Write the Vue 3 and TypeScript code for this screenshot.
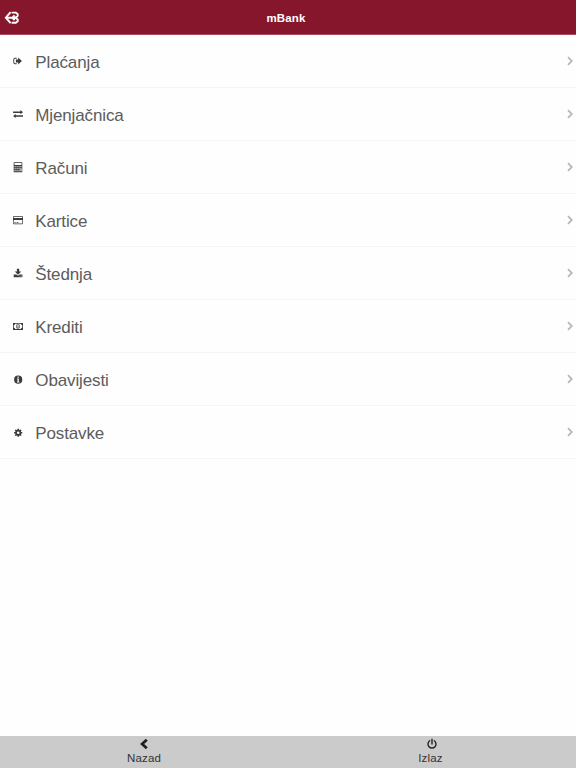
<script setup lang="ts">
type IconName = 'signout' | 'exchange' | 'calculator' | 'card' | 'download' | 'money' | 'info' | 'cog'

interface MenuItem {
  label: string
  icon: IconName
}

const items: MenuItem[] = [
  { label: 'Plaćanja', icon: 'signout' },
  { label: 'Mjenjačnica', icon: 'exchange' },
  { label: 'Računi', icon: 'calculator' },
  { label: 'Kartice', icon: 'card' },
  { label: 'Štednja', icon: 'download' },
  { label: 'Krediti', icon: 'money' },
  { label: 'Obavijesti', icon: 'info' },
  { label: 'Postavke', icon: 'cog' },
]

// Each path is drawn on a 12 x 12 grid and filled with the even-odd rule.
const paths: Record<IconName, string> = {
  signout:
    'M4.7 2.8H3Q1.3 2.8 1.3 4.5V7.5Q1.3 9.2 3 9.2H4.7V8.3H3Q2.2 8.3 2.2 7.5V4.5Q2.2 3.7 3 3.7H4.7ZM3.9 4.5H6.2V2.5L9.9 6L6.2 9.5V7.5H3.9Z',
  exchange:
    'M1.1 3.4H8.4V2.1L11 4.2L8.4 6.2V5H1.1ZM11 7.2H3.7V6L1.1 8.1L3.7 10.1V8.8H11Z',
  calculator:
    'M2.2 1.2H9.8Q10.3 1.2 10.3 1.7V10.7Q10.3 11.2 9.8 11.2H2.2Q1.7 11.2 1.7 10.7V1.7Q1.7 1.2 2.2 1.2ZM2.5 2.1V4H9.5V2.1ZM2.5 5.2V6.3H3.7V5.2ZM4.5 5.2V6.3H5.7V5.2ZM6.5 5.2V6.3H7.7V5.2ZM8.4 5.2V6.3H9.6V5.2ZM2.5 7.2V8.3H3.7V7.2ZM4.5 7.2V8.3H5.7V7.2ZM6.5 7.2V8.3H7.7V7.2ZM2.5 9.2V10.3H3.7V9.2ZM4.5 9.2V10.3H5.7V9.2ZM6.5 9.2V10.3H7.7V9.2ZM8.4 7.2V10.3H9.6V7.2Z',
  card:
    'M2 2H10Q11 2 11 3V9.3Q11 10.3 10 10.3H2Q1 10.3 1 9.3V3Q1 2 2 2ZM1.7 3V4H10.3V3Q10.3 2.7 10 2.7H2Q1.7 2.7 1.7 3ZM1.7 6V9.3Q1.7 9.6 2 9.6H10Q10.3 9.6 10.3 9.3V6ZM2.4 8.2H3.8V9H2.4ZM4.5 8.2H6.5V9H4.5Z',
  download:
    'M4.9 1.8H7.2V4.6H9.3L6.05 7.8L2.8 4.6H4.9ZM1.7 7.5H4.4L6.05 8.8L7.7 7.5H10.4V10.3H1.7ZM7.7 8.8V9.5H8.4V8.8ZM9 8.8V9.5H9.6V8.8Z',
  money:
    'M1 2.9H11V9.9H1ZM3.1 3.7Q3.1 5.1 1.8 5.1V7.7Q3.1 7.7 3.1 9.1H8.9Q8.9 7.7 10.2 7.7V5.1Q8.9 5.1 8.9 3.7ZM6 4Q7.9 4 7.9 6.4T6 8.8T4.1 6.4T6 4ZM6 4.6Q4.7 4.6 4.7 6.4T6 8.2T7.3 6.4T6 4.6ZM5.6 5.1H6.3V7.2H6.8V7.7H5.2V7.2H5.6Z',
  info:
    'M6.2 2.6A4.1 4.1 0 1 1 6.2 10.8A4.1 4.1 0 1 1 6.2 2.6ZM5.5 3.5V4.7H6.8V3.5ZM4.9 5.5V6.3H5.5V8.7H4.9V9.5H7.5V8.7H6.8V5.5Z',
  cog:
    'M5.5 2.7H6.9L7.1 3.8L7.8 4.1L8.7 3.4L9.6 4.3L8.9 5.2L9.2 5.9L10.3 6.1V7.4L9.2 7.6L8.9 8.3L9.6 9.2L8.7 10.1L7.8 9.4L7.1 9.7L6.9 10.8H5.5L5.3 9.7L4.6 9.4L3.7 10.1L2.8 9.2L3.5 8.3L3.2 7.6L2.1 7.4V6.1L3.2 5.9L3.5 5.2L2.8 4.3L3.7 3.4L4.6 4.1L5.3 3.8ZM6.2 5.4A1.35 1.35 0 1 0 6.2 8.1A1.35 1.35 0 1 0 6.2 5.4Z',
}
</script>

<template>
  <div class="app">
    <header class="header">
      <svg class="logo" viewBox="0 0 16 14" aria-hidden="true">
        <path class="logo-line" d="M6.6 1.2L1.8 6.7L6.6 12.2" />
        <path class="logo-line" d="M7.6 1.6H11.8L13.7 3.2V4.9L11.6 6.7L13.7 8.5V10.2L11.8 11.8H7.6" />
        <path class="logo-line" d="M2.6 6.7H12M10.6 4.3L8.3 6.7L10.6 9.1" />
      </svg>
      <h1 class="title">mBank</h1>
    </header>

    <main class="menu">
      <a v-for="item in items" :key="item.label" class="row">
        <svg class="icon" viewBox="0 0 12 12" aria-hidden="true">
          <path :d="paths[item.icon]" fill-rule="evenodd" />
        </svg>
        <span class="label">{{ item.label }}</span>
        <svg class="chevron" viewBox="0 0 6 10" aria-hidden="true">
          <path d="M1 1.2L4.8 5L1 8.8" />
        </svg>
      </a>
    </main>

    <footer class="footer">
      <a class="action">
        <svg class="action-icon" viewBox="0 0 12 12" aria-hidden="true">
          <path class="back" d="M8.8 1.7L4.1 6L8.8 10.3" />
        </svg>
        <span class="caption">Nazad</span>
      </a>
      <a class="action exit">
        <svg class="action-icon" viewBox="0 0 12 12" aria-hidden="true">
          <path class="power-line" d="M3.7 2.8A4 4 0 1 0 8.3 2.8M6 1.3V6" />
        </svg>
        <span class="caption">Izlaz</span>
      </a>
    </footer>
  </div>
</template>

<style>
body {
  margin: 0;
  background: #fefefe;
}
</style>

<style scoped>
.app {
  display: flex;
  flex-direction: column;
  height: 100vh;
  background: #fefefe;
  font-family: "Liberation Sans", Arial, sans-serif;
}

.header {
  display: grid;
  grid-template-columns: 24px 1fr 28px;
  align-items: center;
  box-sizing: border-box;
  height: 35px;
  border-bottom: 1px solid #a54a61;
  background: #85162c;
}

.logo {
  width: 16px;
  height: 14px;
  margin: 1px 0 0 4px;
}

.logo-line {
  fill: none;
  stroke: #fff;
  stroke-width: 1.9;
}

.title {
  margin: 2px 0 0;
  color: #fff;
  font-size: 11.5px;
  letter-spacing: 0.15px;
  line-height: 14px;
  text-align: center;
}

.menu {
  flex: 1;
}

.row {
  display: flex;
  align-items: center;
  box-sizing: border-box;
  height: 53px;
  padding: 0 3px 0 12px;
  border-bottom: 1px solid #f5f5f5;
}

.icon {
  width: 12px;
  height: 12px;
  margin-right: 11.3px;
  fill: #3b3b3b;
}

.label {
  flex: 1;
  padding-top: 4px;
  color: #5c5c5c;
  font-size: 17px;
  letter-spacing: -0.13px;
  line-height: 22px;
}

.chevron {
  width: 6px;
  height: 10px;
}

.chevron path {
  fill: none;
  stroke: #b8b8b8;
  stroke-width: 1.8;
}

.footer {
  display: flex;
  height: 32px;
  background: #cbcbcb;
}

.action {
  display: flex;
  flex: 1;
  flex-direction: column;
  align-items: center;
  padding-top: 2px;
  color: #333;
  font-size: 11.5px;
  letter-spacing: 0.2px;
  line-height: 15px;
}

.action-icon {
  width: 12px;
  height: 12px;
}

.caption {
  padding-top: 1px;
}

.exit .caption {
  padding-right: 3px;
}

.exit .action-icon {
  margin-right: 1px;
}

.back {
  fill: none;
  stroke: #222;
  stroke-width: 2.8;
}

.power-line {
  fill: none;
  stroke: #222;
  stroke-width: 1.4;
  stroke-linecap: round;
}
</style>
